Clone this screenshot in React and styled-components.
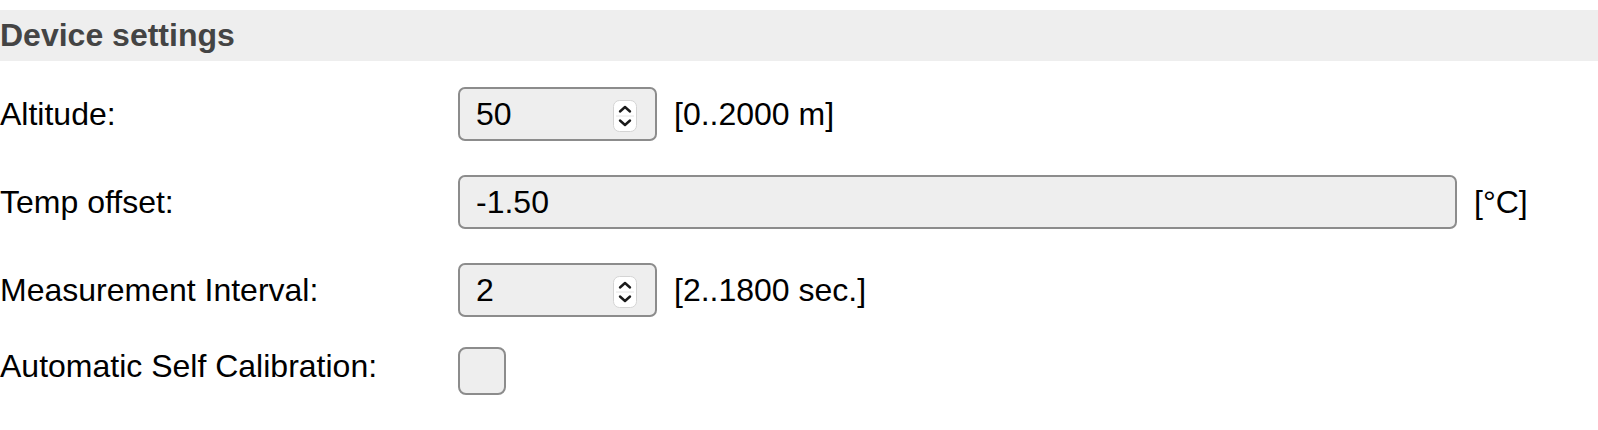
import React from 'react';
import styled, { createGlobalStyle } from 'styled-components';

const GlobalStyle = createGlobalStyle`
  body {
    margin: 0;
    background: #fff;
    font-family: "Liberation Sans", Arial, sans-serif;
    color: #000;
  }
`;

const Page = styled.div`
  padding-top: 10px;
`;

const Header = styled.h2`
  margin: 0;
  height: 51px;
  display: flex;
  align-items: center;
  background: #eeeeee;
  color: #444;
  font-size: 32px;
  font-weight: bold;
`;

const Form = styled.div`
  display: flex;
  flex-direction: column;
  gap: 34px;
  padding-top: 26px;
`;

const Row = styled.div`
  display: grid;
  grid-template-columns: 458px auto;
  align-items: ${(p) => (p.$top ? 'start' : 'center')};
  margin-top: ${(p) => (p.$top ? '-4px' : '0')};
`;

const Label = styled.label`
  font-size: 32px;
  margin-top: ${(p) => (p.$top ? '1px' : '0')};
`;

const Field = styled.div`
  display: flex;
  align-items: center;
  gap: 17px;
`;

const InputBox = styled.div`
  box-sizing: border-box;
  width: ${(p) => p.$width}px;
  height: 54px;
  display: flex;
  align-items: center;
  padding: 0 18px 0 16px;
  border: 2px solid #8c8c8c;
  border-radius: 7px;
  background: #eeeeee;
`;

const TextInput = styled.input`
  flex: 1;
  min-width: 0;
  padding: 0;
  border: none;
  outline: none;
  background: transparent;
  font: inherit;
  font-size: 32px;
  color: #000;
`;

const Spinner = styled.svg`
  flex: none;
  margin-top: 4px;
`;

const Unit = styled.span`
  font-size: 32px;
`;

const Checkbox = styled.input`
  appearance: none;
  margin: 0;
  box-sizing: border-box;
  width: 48px;
  height: 48px;
  border: 2px solid #8c8c8c;
  border-radius: 8px;
  background: #eeeeee;
`;

const SpinIcon = () => (
  <Spinner width="24" height="32" viewBox="0 0 24 32">
    <rect x="0.5" y="0.5" width="23" height="31" rx="6" fill="#fff" stroke="#d4d4d4" />
    <line x1="3" y1="16" x2="21" y2="16" stroke="#e4e4e4" />
    <path d="M7 11.5 L12 7 L17 11.5" fill="none" stroke="#1a1a1a" strokeWidth="2.4" strokeLinecap="round" strokeLinejoin="round" />
    <path d="M7 20.5 L12 25 L17 20.5" fill="none" stroke="#1a1a1a" strokeWidth="2.4" strokeLinecap="round" strokeLinejoin="round" />
  </Spinner>
);

const NumberField = ({ value, unit }) => (
  <Field>
    <InputBox $width={199}>
      <TextInput defaultValue={value} />
      <SpinIcon />
    </InputBox>
    <Unit>{unit}</Unit>
  </Field>
);

export default function App() {
  return (
    <Page>
      <GlobalStyle />
      <Header>Device settings</Header>
      <Form>
        <Row>
          <Label>Altitude:</Label>
          <NumberField value="50" unit="[0..2000 m]" />
        </Row>
        <Row>
          <Label>Temp offset:</Label>
          <Field>
            <InputBox $width={999}>
              <TextInput defaultValue="-1.50" />
            </InputBox>
            <Unit>[°C]</Unit>
          </Field>
        </Row>
        <Row>
          <Label>Measurement Interval:</Label>
          <NumberField value="2" unit="[2..1800 sec.]" />
        </Row>
        <Row $top>
          <Label $top>Automatic Self Calibration:</Label>
          <Checkbox type="checkbox" />
        </Row>
      </Form>
    </Page>
  );
}
